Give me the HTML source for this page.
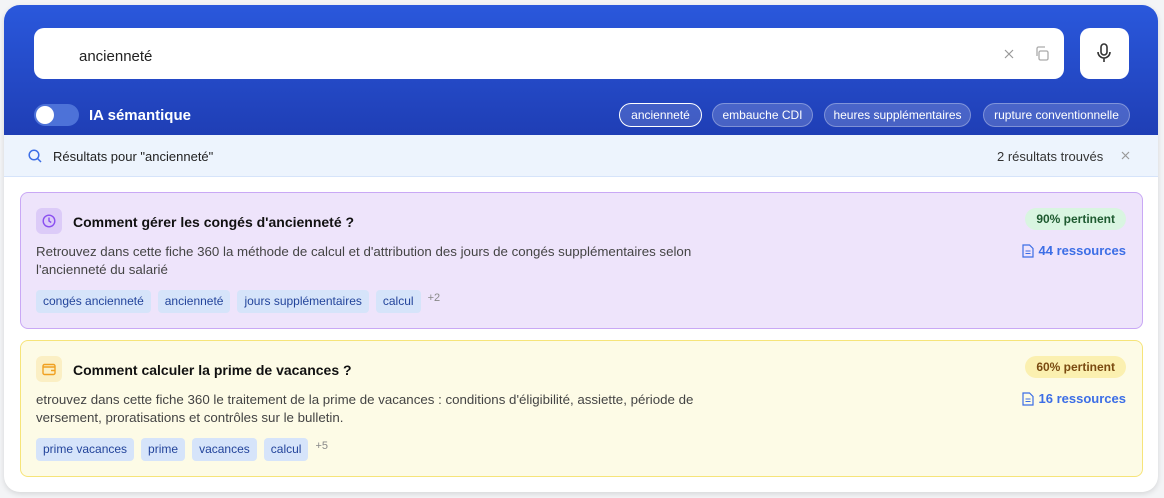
<!DOCTYPE html>
<html><head><meta charset="utf-8"><style>
*{box-sizing:border-box;margin:0;padding:0}
body{width:1164px;height:498px;background:#f3f4f6;font-family:"Liberation Sans",Arial,sans-serif;position:relative;overflow:hidden}
.main{position:absolute;left:4px;top:5px;width:1154px;height:487px;background:#fff;border-radius:16px;overflow:hidden;box-shadow:0 2px 6px rgba(0,0,0,.12)}
.hdr{position:absolute;left:0;top:0;width:100%;height:130px;background:linear-gradient(180deg,#2a58dc,#1f3eb5)}
.search{position:absolute;left:30px;top:23px;width:1030px;height:51px;background:#fff;border-radius:10px}
.search .t{position:absolute;left:45px;top:20px;font-size:15px;color:#222}
.mic{position:absolute;left:1076px;top:23px;width:49px;height:51px;background:#fff;border-radius:10px}
.tog{position:absolute;left:30px;top:99px;width:45px;height:22px;border-radius:11px;background:#4d72d8}
.tog:after{content:"";position:absolute;left:2px;top:2px;width:18px;height:18px;border-radius:50%;background:#fff}
.ia{position:absolute;left:85px;top:102px;color:#fff;font-weight:bold;font-size:15px}
.chip{position:absolute;top:98px;height:24px;border-radius:12px;background:rgba(255,255,255,.18);border:1px solid rgba(255,255,255,.3);color:#fff;font-size:12px;line-height:22px;text-align:center}
.chip.a{border:1.5px solid #fff;background:rgba(255,255,255,.15)}
.bar{position:absolute;left:0;top:130px;width:100%;height:42px;background:#edf4fd;border-bottom:1px solid #d6e4fa}
.bar .l{position:absolute;left:49px;top:14px;font-size:13px;color:#222}
.bar .r{position:absolute;left:993px;top:14px;font-size:13px;color:#333}
.card{position:absolute;left:16px;width:1123px;height:137px;border-radius:8px}
.c1{top:187px;background:#eee4fb;border:1px solid #c9a8f5}
.c2{top:335px;background:#fdfbe6;border:1px solid #f6e47a}
.ic{position:absolute;left:15px;top:15px;width:26px;height:26px;border-radius:6px}
.ttl{position:absolute;left:52px;top:21px;font-size:14px;font-weight:bold;color:#111}
.desc{position:absolute;left:15px;top:50px;width:690px;font-size:13.3px;line-height:18px;color:#444}
.tags{position:absolute;left:15px;top:97px;display:flex;gap:7px;align-items:center}
.tag{background:#d6e4fa;color:#23449b;font-size:12px;height:23px;line-height:23px;padding:0 7px;border-radius:4px}
.more{color:#888;font-size:11px;margin-top:-8px}
.pct{position:absolute;right:16px;top:15px;height:22px;line-height:22px;padding:0 11px;border-radius:11px;font-size:12px;font-weight:bold}
.res{position:absolute;right:16px;top:50px;font-size:13px;color:#3c6ee6;font-weight:bold;display:flex;gap:5px;align-items:center}
</style></head><body>
<div class="main">
<div class="hdr">
 <div class="search"><span class="t">ancienneté</span>
  <svg style="position:absolute;left:970px;top:21px" width="10" height="10" viewBox="0 0 10 10"><path d="M1 1L9 9M9 1L1 9" stroke="#999" stroke-width="1.2"/></svg>
  <svg style="position:absolute;left:1001px;top:18px" width="14" height="15" viewBox="0 0 14 15"><rect x="4" y="5" width="9" height="9" rx="1.5" fill="none" stroke="#aaa" stroke-width="1.3"/><path d="M2 10V2.5A1.5 1.5 0 0 1 3.5 1H10" fill="none" stroke="#aaa" stroke-width="1.3"/></svg>
 </div>
 <div class="mic"><svg style="position:absolute;left:16px;top:15px" width="16" height="20" viewBox="0 0 16 20"><rect x="5" y="1" width="6" height="11" rx="3" fill="none" stroke="#333" stroke-width="1.6"/><path d="M2 9a6 6 0 0 0 12 0M8 15v4" fill="none" stroke="#333" stroke-width="1.6"/></svg></div>
 <div class="tog"></div><div class="ia">IA sémantique</div>
 <div class="chip a" style="left:615px;width:83px">ancienneté</div>
 <div class="chip" style="left:708px;width:101px">embauche CDI</div>
 <div class="chip" style="left:820px;width:147px">heures supplémentaires</div>
 <div class="chip" style="left:979px;width:147px">rupture conventionnelle</div>
</div>
<div class="bar">
 <svg style="position:absolute;left:24px;top:14px" width="14" height="14" viewBox="0 0 14 14"><circle cx="6" cy="6" r="4.8" fill="none" stroke="#3c6ee6" stroke-width="1.5"/><path d="M9.5 9.5L13 13" stroke="#3c6ee6" stroke-width="1.5"/></svg>
 <span class="l">Résultats pour "ancienneté"</span><span class="r">2 résultats trouvés</span>
 <svg style="position:absolute;left:1117px;top:16px" width="9" height="9" viewBox="0 0 9 9"><path d="M1 1L8 8M8 1L1 8" stroke="#999" stroke-width="1.2"/></svg>
</div>
<div class="card c1">
 <div class="ic" style="background:#dccbf8"><svg style="position:absolute;left:6px;top:6px" width="14" height="14" viewBox="0 0 14 14"><circle cx="7" cy="7" r="5.8" fill="none" stroke="#8a4ff0" stroke-width="1.4"/><path d="M7 3.5V7l2.2 1.5" fill="none" stroke="#8a4ff0" stroke-width="1.4"/></svg></div>
 <div class="ttl">Comment gérer les congés d'ancienneté ?</div>
 <div class="desc">Retrouvez dans cette fiche 360 la méthode de calcul et d'attribution des jours de congés supplémentaires selon l'ancienneté du salarié</div>
 <div class="tags"><span class="tag">congés ancienneté</span><span class="tag">ancienneté</span><span class="tag">jours supplémentaires</span><span class="tag">calcul</span><span class="more">+2</span></div>
 <div class="pct" style="background:#d9f5e1;color:#1e5a30">90% pertinent</div>
 <div class="res"><svg width="12" height="14" viewBox="0 0 12 14"><path d="M1 1h6.5L11 4.5V13H1z" fill="none" stroke="#3c6ee6" stroke-width="1.2"/><path d="M3.5 7h5M3.5 9.5h5" stroke="#3c6ee6" stroke-width="1.1"/></svg>44 ressources</div>
</div>
<div class="card c2">
 <div class="ic" style="background:#fbefc4"><svg style="position:absolute;left:6px;top:6px" width="14" height="14" viewBox="0 0 14 14"><rect x="1" y="2.5" width="12" height="10" rx="1.5" fill="none" stroke="#f0a020" stroke-width="1.4"/><path d="M1 5h12M9 8.5h4" stroke="#f0a020" stroke-width="1.4"/></svg></div>
 <div class="ttl">Comment calculer la prime de vacances ?</div>
 <div class="desc">etrouvez dans cette fiche 360 le traitement de la prime de vacances : conditions d'éligibilité, assiette, période de versement, proratisations et contrôles sur le bulletin.</div>
 <div class="tags"><span class="tag">prime vacances</span><span class="tag">prime</span><span class="tag">vacances</span><span class="tag">calcul</span><span class="more">+5</span></div>
 <div class="pct" style="background:#fbf0b0;color:#7a4a10">60% pertinent</div>
 <div class="res"><svg width="12" height="14" viewBox="0 0 12 14"><path d="M1 1h6.5L11 4.5V13H1z" fill="none" stroke="#3c6ee6" stroke-width="1.2"/><path d="M3.5 7h5M3.5 9.5h5" stroke="#3c6ee6" stroke-width="1.1"/></svg>16 ressources</div>
</div>
</div>
</body></html>
